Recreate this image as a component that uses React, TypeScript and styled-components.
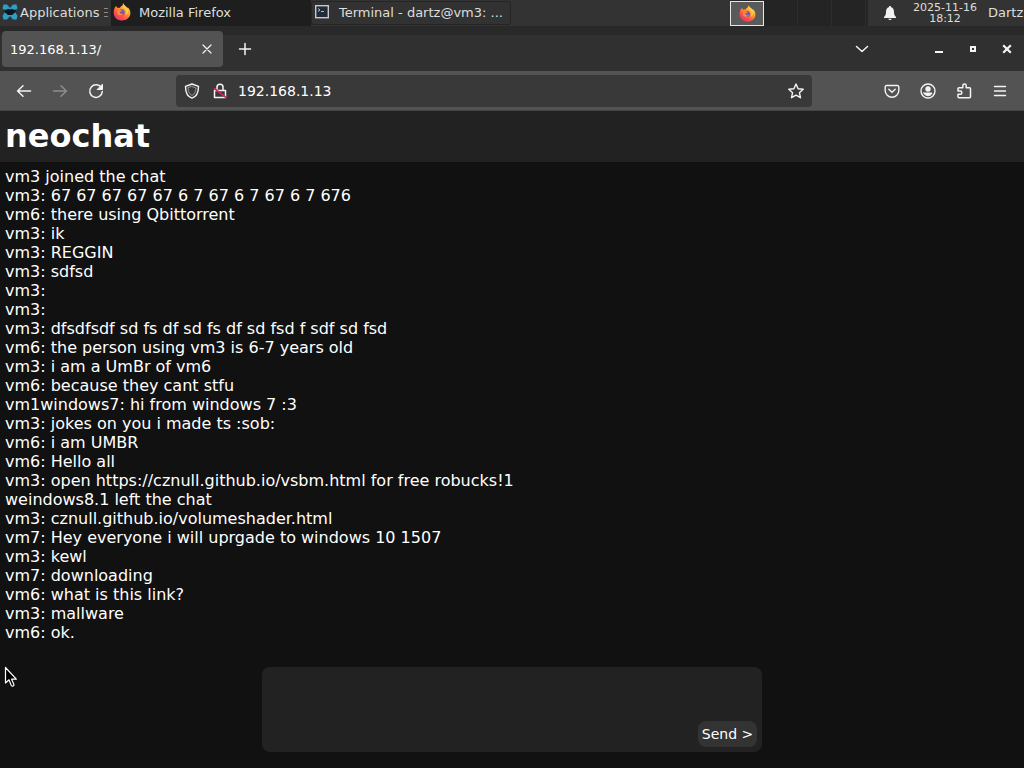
import React from "react";
import styled, { createGlobalStyle } from "styled-components";

const GlobalStyle = createGlobalStyle`
  * { box-sizing: border-box; }
  body {
    margin: 0;
    background: #111;
    color: #fff;
    font-family: "DejaVu Sans", Verdana, sans-serif;
  }
  button, input, textarea {
    font-family: inherit;
    color: inherit;
    border: 0;
    padding: 0;
    margin: 0;
  }
  svg { display: block; flex: none; }
`;

const Screen = styled.div`
  display: flex;
  flex-direction: column;
  min-height: 100vh;
  overflow: hidden;
`;

/* Desktop panel */
const Panel = styled.header`
  display: flex;
  align-items: center;
  height: 26px;
  background: #333;
  color: #dedede;
  font-size: 13px;
  white-space: nowrap;
  overflow: hidden;
`;

const AppMenu = styled.button`
  display: flex;
  align-items: center;
  gap: 2px;
  width: 104px;
  height: 26px;
  padding: 0 0 2px 2px;
  background: transparent;
  font-size: 13px;
  flex: none;
`;

const Grip = styled.span`
  width: 4px;
  height: 10px;
  margin-right: 3px;
  flex: none;
  background: repeating-linear-gradient(#8a8a8a 0 1px, transparent 1px 4px);
`;

const Task = styled.button<{ $active?: boolean }>`
  display: flex;
  align-items: center;
  gap: 8px;
  width: 200px;
  height: ${(p) => (p.$active ? "26px" : "24px")};
  padding: 0 0 2px 2px;
  font-size: 13px;
  flex: none;
  background: ${(p) => (p.$active ? "#1e1e1e" : "#323232")};
  border-radius: ${(p) => (p.$active ? "0" : "3px")};
  box-shadow: ${(p) => (p.$active ? "none" : "inset 0 0 0 1px #252525")};
`;

const Spacer = styled.div`
  flex: 1;
`;

const Pager = styled.div`
  display: flex;
  align-items: center;
  width: 138px;
  height: 26px;
  background: #242424;
  flex: none;
`;

const Workspace = styled.button<{ $current?: boolean }>`
  display: flex;
  align-items: center;
  justify-content: center;
  width: 34px;
  height: ${(p) => (p.$current ? "25px" : "26px")};
  background: ${(p) => (p.$current ? "#5a5a5a" : "#242424")};
  border: ${(p) => (p.$current ? "1px solid #e6e6e6" : "0")};
  border-right: ${(p) => (p.$current ? "1px solid #e6e6e6" : "1px solid #2d2d2d")};
`;

const Bell = styled.button`
  display: flex;
  justify-content: center;
  width: 44px;
  background: transparent;
  flex: none;
`;

const Clock = styled.time`
  width: 66px;
  font-size: 11px;
  line-height: 11px;
  text-align: center;
  flex: none;
`;

const User = styled.button`
  width: 46px;
  padding: 0 0 2px 10px;
  background: transparent;
  font-size: 13px;
  text-align: left;
  flex: none;
`;

/* Browser chrome */
const TabBar = styled.div`
  display: flex;
  align-items: center;
  height: 45px;
  padding: 1px 0 0 2px;
  background: linear-gradient(#292929 0 9px, #303030 9px);
`;

const Tab = styled.div`
  display: flex;
  align-items: center;
  justify-content: space-between;
  width: 221px;
  height: 36px;
  padding-left: 8px;
  border-radius: 4px;
  background: #535353;
  font-size: 13px;
`;

const IconButton = styled.button<{ $width?: number; $dim?: boolean }>`
  display: flex;
  align-items: center;
  justify-content: center;
  width: ${(p) => p.$width ?? 36}px;
  height: 32px;
  background: transparent;
  color: ${(p) => (p.$dim ? "#8e8e8e" : "#f4f4f4")};
  flex: none;
`;

const WindowButtons = styled.div`
  display: flex;
  margin-left: 42px;
`;

const Toolbar = styled.nav`
  display: flex;
  align-items: center;
  height: 40px;
  padding: 0 6px;
  background: #535353;
  border-bottom: 1px solid #434545;
`;

const AddressBar = styled.form`
  display: flex;
  align-items: center;
  flex: 1;
  height: 32px;
  margin: 0 62px;
  padding-left: 2px;
  border-radius: 4px;
  background: #393939;
`;

const Address = styled.input`
  flex: 1;
  min-width: 0;
  height: 32px;
  padding-left: 4px;
  background: transparent;
  font-size: 14px;
  outline: 0;
`;

/* Chat page */
const Page = styled.main`
  display: flex;
  flex-direction: column;
  flex: 1;
  padding-bottom: 16px;
  background: #111;
`;

const Title = styled.h1`
  margin: 0;
  padding: 6px 5px 7px;
  background: #222;
  font-size: 32px;
  line-height: 38px;
`;

const Messages = styled.ul`
  flex: 1;
  margin: 0;
  padding: 5px;
  list-style: none;
  font-size: 16px;
  line-height: 19px;
`;

const Message = styled.li`
  min-height: 19px;
`;

const Composer = styled.form`
  display: flex;
  align-items: flex-end;
  width: 500px;
  max-width: 100%;
  height: 85px;
  margin: 0 auto;
  padding: 5px;
  border-radius: 8px;
  background: #222;
`;

const Draft = styled.textarea`
  flex: 1;
  height: 75px;
  resize: none;
  background: transparent;
  font-size: 16px;
  outline: 0;
`;

const Send = styled.button`
  width: 59px;
  height: 26px;
  border-radius: 8px;
  background: #333;
  font-size: 14px;
  white-space: nowrap;
`;

const Pointer = styled.svg`
  position: absolute;
  left: 4px;
  top: 666px;
`;

function Stroke({ size = 16, width = 1.5, children }: { size?: number; width?: number; children: React.ReactNode }) {
  return (
    <svg width={size} height={size} viewBox="0 0 16 16" fill="none" stroke="currentColor" strokeWidth={width} strokeLinecap="round" strokeLinejoin="round" aria-hidden="true">
      {children}
    </svg>
  );
}

function Firefox({ id, size = 18 }: { id: string; size?: number }) {
  return (
    <svg width={size} height={size} viewBox="0 0 18 18" aria-hidden="true">
      <defs>
        <linearGradient id={id} x1="0.85" y1="0.05" x2="0.2" y2="1">
          <stop offset="0" stopColor="#ffe34a" />
          <stop offset="0.4" stopColor="#ff9a32" />
          <stop offset="0.7" stopColor="#ff5149" />
          <stop offset="1" stopColor="#e0307c" />
        </linearGradient>
      </defs>
      <path fill={`url(#${id})`} d="M3.1 3.1l1.4 2c.8-.4 1.6-.4 2.3-.2C7.6 3.4 8.6 2.7 9.7 2.4c-.2-.9.1-1.7.6-2.2.5 1.5 1.6 2.2 2.8 3.3.7.6 1 1.2 1.2 1.8.3-.3.3-.8.2-1.3 1.7 1.6 2.9 3.7 2.9 6.1 0 4.3-3.6 7.5-8.3 7.5S.7 14.2.7 9.9c0-2.700.7-5.200 2.400-6.800z" />
      <circle cx="8.500" cy="9.500" r="3.200" fill="#7b52c4" />
      <path fill="#ff8b35" d="M4.100 7.200c1.500-.9 3.500-.6 5 .4-.5.900-1.700 1-2.500 1.500.2 1.700 2.100 2.600 3.900 1.500-.8 2.600-5.700 2.700-6.300-.8z" />
      <path fill="#ffcf45" d="M9.800 2.400c.2 2.400 3.400 3.200 3.400 6.500 0 1.200-.4 2.300-1.100 3.200 2-.6 3.400-2.600 3.100-4.800-.3-2.200-2.300-2.800-3.500-4.400z" />
    </svg>
  );
}

const messages = [
  "vm3 joined the chat",
  "vm3: 67 67 67 67 67 6 7 67 6 7 67 6 7 676",
  "vm6: there using Qbittorrent",
  "vm3: ik",
  "vm3: REGGIN",
  "vm3: sdfsd",
  "vm3:",
  "vm3:",
  "vm3: dfsdfsdf sd fs df sd fs df sd fsd f sdf sd fsd",
  "vm6: the person using vm3 is 6-7 years old",
  "vm3: i am a UmBr of vm6",
  "vm6: because they cant stfu",
  "vm1windows7: hi from windows 7 :3",
  "vm3: jokes on you i made ts :sob:",
  "vm6: i am UMBR",
  "vm6: Hello all",
  "vm3: open https://cznull.github.io/vsbm.html for free robucks!1",
  "weindows8.1 left the chat",
  "vm3: cznull.github.io/volumeshader.html",
  "vm7: Hey everyone i will uprgade to windows 10 1507",
  "vm3: kewl",
  "vm7: downloading",
  "vm6: what is this link?",
  "vm3: mallware",
  "vm6: ok.",
];

export default function App() {
  return (
    <Screen>
      <GlobalStyle />
      <Panel>
        <AppMenu>
          <svg width="16" height="16" viewBox="0 0 16 16" aria-hidden="true">
            <path fill="#2d9fc4" d="M1.500 0.500h3.500l3 3.500 3-3.500h3.500l1 3.500-2.500 4 2.500 4-1 3.500h-3.500l-3-3.500-3 3.500H1.500l-1-3.500L3 8 .5 4z" />
            <path fill="#0b161e" d="M1.500 5.500c2 .8 3.500.2 4.500-.8l2 .8 2-.8c1 1 2.500 1.600 4.500.8l-1.500 3-3 2.500H6L3 8.500z" />
          </svg>
          Applications
        </AppMenu>
        <Grip />
        <Task $active>
          <Firefox id="taskFox" />
          Mozilla Firefox
        </Task>
        <Task>
          <svg width="18" height="16" viewBox="0 0 18 16" aria-hidden="true">
            <rect x="2.700" y="1.700" width="12.600" height="12" fill="#222b3a" stroke="#c9c9c9" strokeWidth="1.400" />
            <path d="M5 4.500l2 1.500-2 1.500M8 7.500h3" stroke="#9fc0e8" fill="none" />
          </svg>
          Terminal - dartz@vm3: ...
        </Task>
        <Spacer />
        <Pager>
          <Workspace $current aria-label="Workspace 1">
            <Firefox id="pagerFox" size={17} />
          </Workspace>
          <Workspace aria-label="Workspace 2" />
          <Workspace aria-label="Workspace 3" />
          <Workspace aria-label="Workspace 4" />
        </Pager>
        <Bell aria-label="Notifications">
          <svg width="14" height="16" viewBox="0 0 14 16" fill="#f2f2f2" aria-hidden="true">
            <path d="M7 1c.7 0 1.100.5 1.100 1.200C10.200 2.700 11 4.500 11 7c0 2.800.7 3.800 2 5v1H1v-1c1.300-1.200 2-2.200 2-5 0-2.500.8-4.300 2.900-4.800C5.900 1.500 6.300 1 7 1zM5.300 13.800h3.400C8.500 14.600 7.800 15 7 15s-1.500-.4-1.700-1.200z" />
          </svg>
        </Bell>
        <Clock>
          2025-11-16
          <br />
          18:12
        </Clock>
        <User>Dartz</User>
      </Panel>

      <TabBar>
        <Tab>
          192.168.1.13/
          <IconButton $width={32} aria-label="Close tab">
            <Stroke width={1.2}><path d="M4 4l8 8M12 4l-8 8" /></Stroke>
          </IconButton>
        </Tab>
        <IconButton $width={43} aria-label="New tab">
          <Stroke><path d="M8 2.500v11M2.500 8h11" /></Stroke>
        </IconButton>
        <Spacer />
        <IconButton aria-label="List all tabs">
          <Stroke><path d="M2.500 5.500L8 10.500l5.500-5" /></Stroke>
        </IconButton>
        <WindowButtons>
          <IconButton $width={34} aria-label="Minimize">
            <svg width="16" height="16" aria-hidden="true"><path fill="currentColor" d="M4 10h8v2H4z" /></svg>
          </IconButton>
          <IconButton $width={34} aria-label="Maximize">
            <svg width="16" height="16" aria-hidden="true"><path fill="none" stroke="currentColor" strokeWidth="2" d="M6 6h4v4H6z" /></svg>
          </IconButton>
          <IconButton $width={34} aria-label="Close">
            <svg width="16" height="16" aria-hidden="true"><path stroke="currentColor" strokeWidth="2.200" d="M4.200 4.200l7.600 7.600M11.800 4.200l-7.600 7.600" /></svg>
          </IconButton>
        </WindowButtons>
      </TabBar>

      <Toolbar>
        <IconButton aria-label="Back">
          <Stroke><path d="M14.500 8h-13M7 2.800L1.600 8 7 13.200" /></Stroke>
        </IconButton>
        <IconButton $dim aria-label="Forward">
          <Stroke><path d="M1.500 8h13M9 2.800L14.400 8 9 13.200" /></Stroke>
        </IconButton>
        <IconButton aria-label="Reload">
          <Stroke>
            <path d="M13.500 5A6.300 6.300 0 1 0 14.300 8.500" />
            <path fill="currentColor" strokeWidth="1" d="M14.500 1.500v5h-5z" />
          </Stroke>
        </IconButton>
        <AddressBar>
          <IconButton as="span" $width={28}>
            <Stroke width={1.4}>
              <path d="M8 1l6.500 2.400C14.500 9 12.500 13.500 8 15.200 3.500 13.500 1.500 9 1.500 3.400z" />
              <path strokeWidth="0.800" opacity="0.6" d="M8 3.500l4 1.500c-.2 3.500-1.500 6.200-4 7.500-2.500-1.300-3.800-4-4-7.500z" />
            </Stroke>
          </IconButton>
          <IconButton as="span" $width={28}>
            <Stroke width={1.5}>
              <path d="M2.500 7.500h11v7h-11zM5 7.300V4.200a3 3 0 0 1 6 0v3.100" />
              <path stroke="#d02a58" strokeWidth="1.600" d="M2.500 5.500l11.500 9" />
            </Stroke>
          </IconButton>
          <Address aria-label="Address" defaultValue="192.168.1.13" />
          <IconButton $width={32} type="button" aria-label="Bookmark this page">
            <Stroke width={1.4}><path d="M8 1l2.100 4.700 5.100.5-3.800 3.500 1.100 5L8 12.100l-4.500 2.600 1.100-5L.8 6.200l5.100-.5z" /></Stroke>
          </IconButton>
        </AddressBar>
        <IconButton aria-label="Save to Pocket">
          <Stroke width={1.4}><path d="M2.500 2.500h11a1.300 1.300 0 0 1 1.300 1.300V7.500a6.800 6.800 0 0 1-13.600 0V3.800a1.300 1.300 0 0 1 1.300-1.300zM4.800 6.300L8 9.300l3.200-3" /></Stroke>
        </IconButton>
        <IconButton aria-label="Account">
          <Stroke width={1.4}>
            <circle cx="8" cy="8" r="7" />
            <circle cx="8" cy="6" r="2" fill="currentColor" />
            <path fill="currentColor" strokeWidth="1" d="M4 10h8c-.5 1.800-2 2.700-4 2.700S4.500 11.800 4 10z" />
          </Stroke>
        </IconButton>
        <IconButton aria-label="Extensions">
          <Stroke width={1.5}><path d="M3 4.800h3.800V2.700a1.700 1.700 0 0 1 3.400 0v2.100h3.300a1 1 0 0 1 1 1v8a1 1 0 0 1-1 1H3a1 1 0 0 1-1-1v-2.600h2.300a1.500 1.500 0 0 0 0-3.100H2V5.800a1 1 0 0 1 1-1z" /></Stroke>
        </IconButton>
        <IconButton aria-label="Open application menu">
          <Stroke width={1.4}><path d="M2.500 3.500h11M2.500 8h11M2.500 12.500h11" /></Stroke>
        </IconButton>
      </Toolbar>

      <Page>
        <Title>neochat</Title>
        <Messages>
          {messages.map((text, i) => (
            <Message key={i}>{text}</Message>
          ))}
        </Messages>
        <Composer>
          <Draft aria-label="Message" />
          <Send type="button">Send &gt;</Send>
        </Composer>
      </Page>

      <Pointer width="14" height="22" viewBox="0 0 14 22" aria-hidden="true">
        <path fill="#000" stroke="#fff" strokeWidth="1.200" strokeLinejoin="round" d="M1.500 1.500v15.500l3.500-3.200 2.300 5.700c.9 1.200 3 .4 2.600-1.100l-2.300-5.200h4.700z" />
      </Pointer>
    </Screen>
  );
}
